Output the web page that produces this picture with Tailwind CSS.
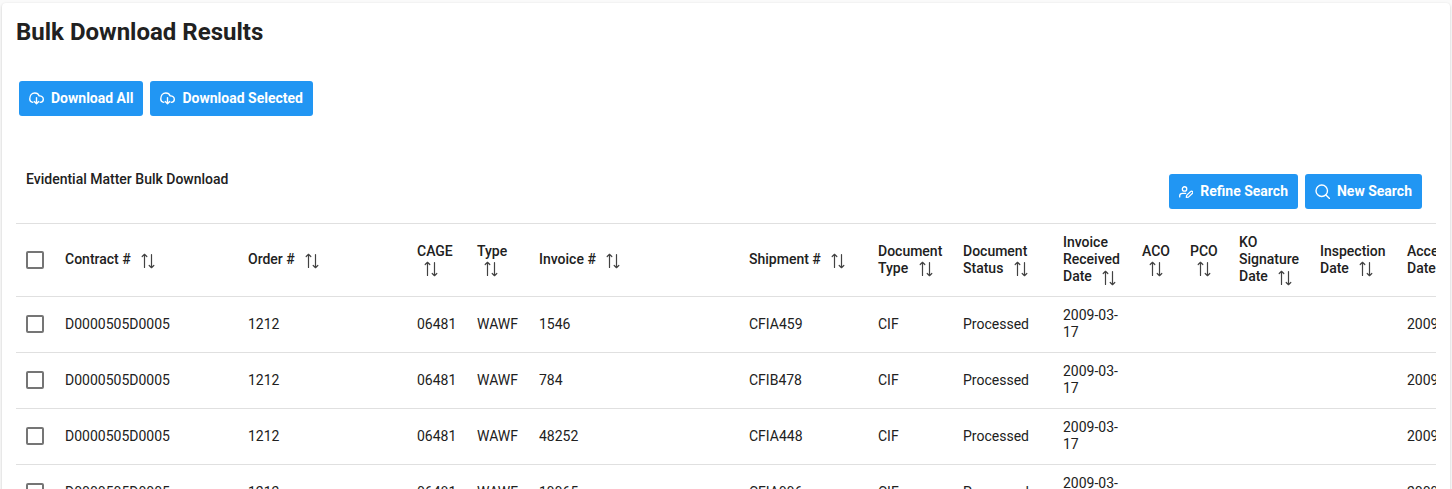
<!DOCTYPE html>
<html lang="en">
<head>
<meta charset="utf-8">
<meta name="viewport" content="width=device-width, initial-scale=1">
<title>Bulk Download Results</title>
<script src="https://cdn.jsdelivr.net/npm/@tailwindcss/browser@4"></script>
</head>
<body class="h-screen overflow-hidden bg-[#fafafa] px-0.5 pt-[3px] font-['Roboto',sans-serif] text-sm/[17px] text-[#212121]">

<svg class="hidden" aria-hidden="true">
  <symbol id="cloud" viewBox="0 0 24 24" fill="none" stroke="currentColor" stroke-width="2.2" stroke-linecap="round" stroke-linejoin="round">
    <path d="M6 18.2A5.3 5.3 0 0 1 1.2 12.9C1.2 7.2 4.5 3.2 9.3 3.2C12.8 3.2 15.2 5 16.3 7.9C20 7.6 22.9 9.9 22.9 13.2C22.9 16 20.9 18.2 18 18.2"/>
    <path d="M12 10.5V20M8.4 16.8L12 20.3L15.6 16.8"/>
  </symbol>
  <symbol id="user-edit" viewBox="0 0 24 24" fill="none" stroke="currentColor" stroke-width="2.2" stroke-linecap="round" stroke-linejoin="round">
    <circle cx="9.5" cy="6.8" r="3.8"/>
    <path d="M1.2 20.5V18.6C1.2 15.8 3.4 14.2 6 14.2H11.5"/>
    <path d="M12.6 21.3L13.1 17.8L20 11.2A2.1 2.1 0 0 1 23.2 14.3L16.2 20.8L12.6 21.3Z"/>
  </symbol>
  <symbol id="search" viewBox="0 0 24 24" fill="none" stroke="currentColor" stroke-width="2.2" stroke-linecap="round">
    <circle cx="10.8" cy="10.8" r="9.2"/>
    <path d="M17.5 17.5L23.2 23.2"/>
  </symbol>
  <symbol id="sort" viewBox="0 0 14 16" fill="none" stroke="currentColor" stroke-width="1.2" stroke-linecap="round" stroke-linejoin="round">
    <path d="M3.5 14.5V1.5M1.2 3.5L3.5 1.3L5.8 3.5M10.5 1.5V14.5M8.2 12.5L10.5 14.7L12.8 12.5"/>
  </symbol>
</svg>

<main class="min-h-screen rounded bg-white px-3.5 pt-3.5 shadow-[0_1px_3px_rgba(0,0,0,0.2)]">
  <h1 class="text-2xl/[30px] font-bold">Bulk Download Results</h1>

  <div class="mt-[34px] flex gap-[7px] pl-[3px]">
    <button type="button" class="flex h-[35px] items-center gap-[7px] rounded-[3px] bg-[#2196f3] px-2.5 font-bold text-white"><svg class="size-[15px] overflow-visible" aria-hidden="true"><use href="#cloud"/></svg>Download All</button>
    <button type="button" class="flex h-[35px] items-center gap-[7px] rounded-[3px] bg-[#2196f3] px-2.5 font-bold text-white"><svg class="size-[15px] overflow-visible" aria-hidden="true"><use href="#cloud"/></svg>Download Selected</button>
  </div>

  <section class="mt-11">
    <header class="flex items-start justify-between border-b border-[#e0e0e0] px-3.5 pt-3.5 pb-3.5 pl-2.5">
      <h2 class="-mt-[3px] font-medium">Evidential Matter Bulk Download</h2>
      <div class="flex gap-[7px]">
        <button type="button" class="flex h-[35px] items-center gap-[7px] rounded-[3px] bg-[#2196f3] px-2.5 font-bold text-white"><svg class="size-3.5 overflow-visible" aria-hidden="true"><use href="#user-edit"/></svg>Refine Search</button>
        <button type="button" class="flex h-[35px] items-center gap-[7px] rounded-[3px] bg-[#2196f3] px-2.5 font-bold text-white"><svg class="size-[15px] overflow-visible" aria-hidden="true"><use href="#search"/></svg>New Search</button>
      </div>
    </header>

    <div class="overflow-x-auto">
      <table class="w-[1500px] table-fixed border-collapse text-left">
        <colgroup>
          <col class="w-[39px]"><col class="w-[183px]"><col class="w-[169px]"><col class="w-[60px]"><col class="w-[62px]"><col class="w-[210px]"><col class="w-[129px]"><col class="w-[85px]"><col class="w-[100px]"><col class="w-[79px]"><col class="w-[48px]"><col class="w-[49px]"><col class="w-[81px]"><col class="w-[87px]"><col>
        </colgroup>
        <thead>
          <tr id="head" class="h-[72px] border-b border-[#e0e0e0]">
            <th class="px-2.5"><input type="checkbox" aria-label="Select all" class="block size-[18px] appearance-none rounded-xs border-2 border-[#757575] checked:bg-[#2196f3]"></th>
          </tr>
        </thead>
        <tbody id="rows"></tbody>
      </table>
    </div>
  </section>
</main>

<script>
  const columns = ['Contract #', 'Order #', 'CAGE', 'Type', 'Invoice #', 'Shipment #', 'Document Type', 'Document Status', 'Invoice Received Date', 'ACO', 'PCO', 'KO Signature Date', 'Inspection Date', 'Acceptance Date'];
  document.getElementById('head').insertAdjacentHTML('beforeend', columns.map(name =>
    `<th scope="col" class="pl-2.5 pr-1 font-medium">${name} <svg class="ml-[7px] -my-1 inline-block h-4 w-3.5 align-middle text-[#424242]" aria-hidden="true"><use href="#sort"/></svg></th>`).join(''));

  const documents = [['1546', 'CFIA459'], ['784', 'CFIB478'], ['48252', 'CFIA448'], ['19965', 'CFIA996']];
  document.getElementById('rows').innerHTML = documents.map(([invoice, shipment]) => {
    const cells = ['D0000505D0005', '1212', '06481', 'WAWF', invoice, shipment, 'CIF', 'Processed', '2009-03-17', '', '', '', '', '2009-03-17'];
    return `<tr class="h-14 border-b border-[#e0e0e0]"><td class="px-2.5"><input type="checkbox" aria-label="Select invoice ${invoice}" class="block size-[18px] appearance-none rounded-xs border-2 border-[#757575] checked:bg-[#2196f3]"></td>` +
      cells.map(text => `<td class="pl-2.5 pr-2">${text}</td>`).join('') + '</tr>';
  }).join('');
</script>
</body>
</html>
